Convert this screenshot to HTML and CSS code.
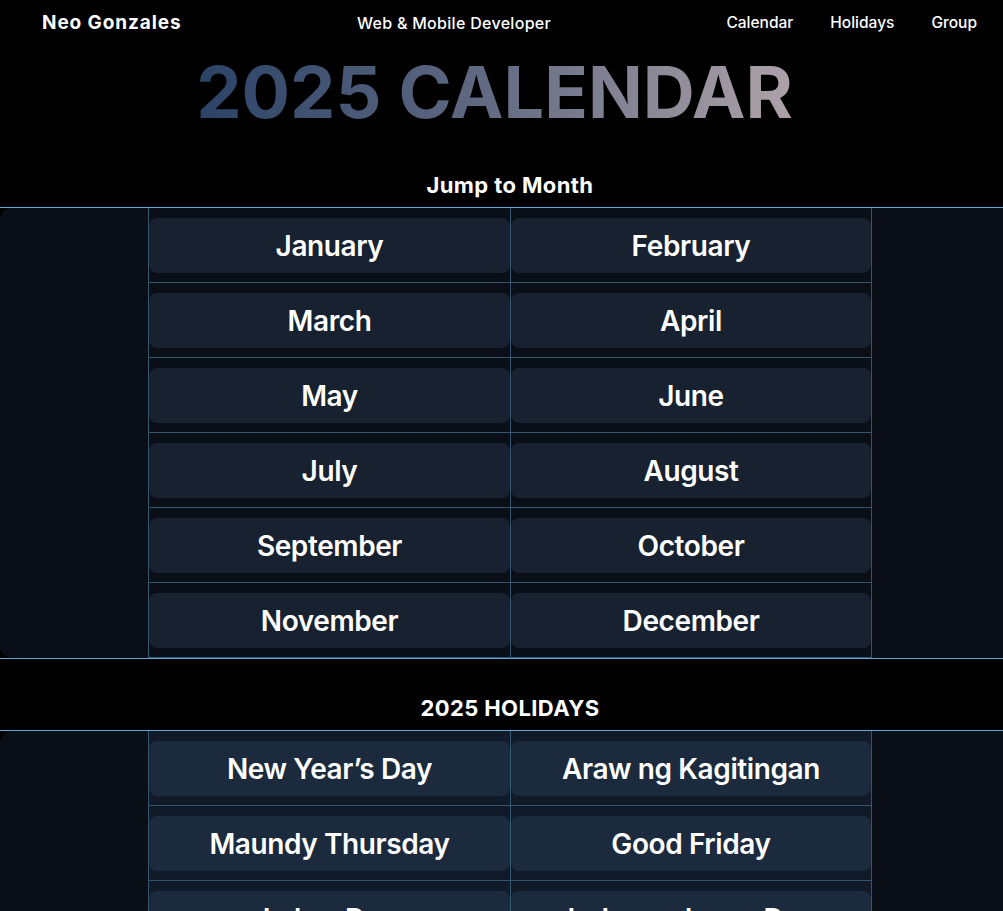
FILE: index.html
```html
<!DOCTYPE html>
<html lang="en">
<head>
<meta charset="utf-8">
<title>2025 Calendar</title>
<link rel="stylesheet" href="styles.css">
</head>
<body>
<div class="page">
  <header class="topbar">
    <div class="brand">Neo Gonzales</div>
    <div class="role">Web &amp; Mobile Developer</div>
    <nav class="nav">
      <a href="#months">Calendar</a>
      <a href="#holidays">Holidays</a>
      <a href="#group">Group</a>
    </nav>
  </header>

  <h1 class="title"><span class="title-text">2025 CALENDAR</span></h1>

  <h2 class="section-heading">Jump to Month</h2>
  <section class="band" id="months">
    <div class="panel">
      <div class="grid">
        <div class="cell"><a class="btn" href="#">January</a></div>
        <div class="cell"><a class="btn" href="#">February</a></div>
        <div class="cell"><a class="btn" href="#">March</a></div>
        <div class="cell"><a class="btn" href="#">April</a></div>
        <div class="cell"><a class="btn" href="#">May</a></div>
        <div class="cell"><a class="btn" href="#">June</a></div>
        <div class="cell"><a class="btn" href="#">July</a></div>
        <div class="cell"><a class="btn" href="#">August</a></div>
        <div class="cell"><a class="btn" href="#">September</a></div>
        <div class="cell"><a class="btn" href="#">October</a></div>
        <div class="cell"><a class="btn" href="#">November</a></div>
        <div class="cell"><a class="btn" href="#">December</a></div>
      </div>
    </div>
  </section>

  <h2 class="section-heading">2025 HOLIDAYS</h2>
  <section class="band" id="holidays">
    <div class="panel">
      <div class="grid grid-holidays">
        <div class="cell"><a class="btn" href="#">New Year’s Day</a></div>
        <div class="cell"><a class="btn" href="#">Araw ng Kagitingan</a></div>
        <div class="cell"><a class="btn" href="#">Maundy Thursday</a></div>
        <div class="cell"><a class="btn" href="#">Good Friday</a></div>
        <div class="cell"><a class="btn" href="#">Labor Day</a></div>
        <div class="cell"><a class="btn" href="#">Independence Day</a></div>
        <div class="cell"><a class="btn" href="#">Ninoy Aquino Day</a></div>
        <div class="cell"><a class="btn" href="#">National Heroes Day</a></div>
        <div class="cell"><a class="btn" href="#">All Saints’ Day</a></div>
        <div class="cell"><a class="btn" href="#">Bonifacio Day</a></div>
        <div class="cell"><a class="btn" href="#">Christmas Day</a></div>
        <div class="cell"><a class="btn" href="#">Rizal Day</a></div>
      </div>
    </div>
  </section>
</div>
</body>
</html>
```

FILE: styles.css
```css
html, body {
  margin: 0;
  padding: 0;
  background: #000;
  overflow-x: hidden;
}

body {
  font-family: Inter, "Liberation Sans", sans-serif;
  color: #fff;
}

.page {
  width: 1020px;
}

.topbar {
  display: flex;
  justify-content: space-between;
  align-items: center;
  height: 46px;
  padding: 0 43px 0 42px;
}

.brand {
  font-size: 19px;
  font-weight: 700;
  letter-spacing: 0.9px;
  line-height: 22px;
}

.role {
  font-size: 16px;
  font-weight: 500;
  letter-spacing: 0.3px;
  line-height: 22px;
}

.nav {
  display: flex;
  gap: 37px;
}

.nav a {
  color: #fff;
  text-decoration: none;
  font-size: 15.5px;
  font-weight: 500;
  line-height: 22px;
}

.title {
  margin: 10px 0 8px;
  padding-right: 31px;
  text-align: center;
  font-size: 72px;
  font-weight: 700;
  line-height: 72px;
}

.title-text {
  display: inline-block;
  background: linear-gradient(90deg, #2b4367 0%, #5d6780 45%, #aea2a8 100%);
  -webkit-background-clip: text;
  background-clip: text;
  color: transparent;
}

.section-heading {
  margin: 0;
  padding: 36px 0 9px;
  text-align: center;
  font-size: 22px;
  font-weight: 700;
  letter-spacing: 0.4px;
  line-height: 26px;
}

.band {
  border-top: 1px solid #5ba6dc;
  border-bottom: 1px solid #5ba6dc;
}

.panel {
  background: #0a0e16;
  border-radius: 12px;
  display: flex;
  justify-content: center;
}

.grid {
  display: grid;
  grid-template-columns: 361px 360px;
  gap: 1px;
  padding: 0 1px 1px;
  background: #33566f;
}

.cell {
  background: #0a0e16;
  padding: 10px 0 9px;
}

.btn {
  display: flex;
  align-items: center;
  justify-content: center;
  height: 55px;
  border-radius: 8px;
  background: #172130;
  color: #fff;
  text-decoration: none;
  font-size: 28px;
  font-weight: 600;
  letter-spacing: -0.4px;
}

.grid-holidays .cell {
  background: #111a28;
}

.grid-holidays .btn {
  background: #1b2a3d;
}
```
